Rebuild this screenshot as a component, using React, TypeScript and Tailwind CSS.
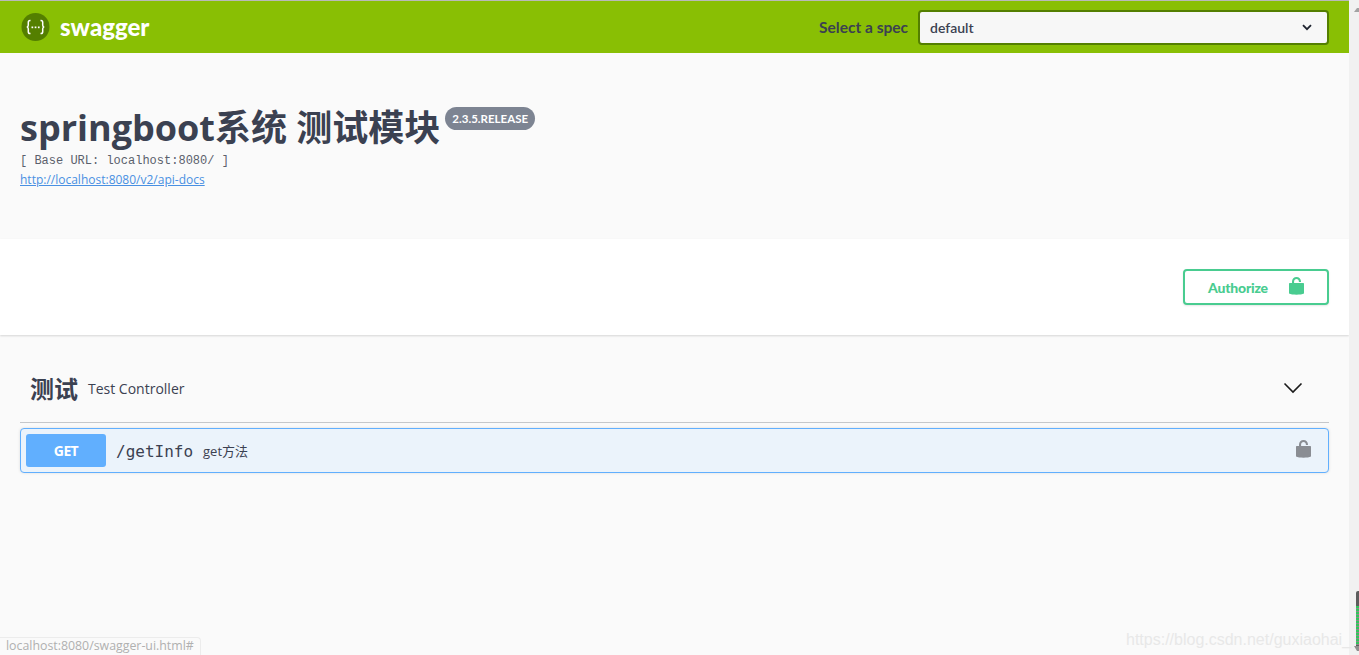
import React from "react";

const sans = "font-['Open_Sans','Noto_Sans_CJK_SC',sans-serif]";

function Lock({ color, className }: { color: string; className?: string }) {
  return (
    <svg viewBox="0 0 15 18" className={className} fill={color}>
      <path d="M0 7C0 6.4 .4 6 1 6H14C14.6 6 15 6.4 15 7V16.6C12 18.2 3 18.2 0 16.6Z" />
      <path d="M3 6.5V4.6C3 2 5 0 7.5 0C10 0 12 2 12 4.6V5H9.9V4.6C9.9 3.2 8.9 2.1 7.5 2.1C6.1 2.1 5.1 3.2 5.1 4.6V6.5Z" />
    </svg>
  );
}

function Logo() {
  return (
    <svg width="29" height="28" viewBox="0 0 29 28">
      <circle cx="14.5" cy="14" r="14" fill="#547f00" />
      <g fill="none" stroke="#fff" strokeWidth="1.5">
        <path d="M9.5 7.5H9C7.8 7.5 7.3 8.2 7.3 9.3V12C7.3 13.2 6.8 13.9 5.8 14C6.8 14.1 7.3 14.8 7.3 16V18.7C7.3 19.8 7.8 20.5 9 20.5H9.5" />
        <path d="M19.5 7.5H20C21.2 7.5 21.7 8.2 21.7 9.3V12C21.7 13.2 22.2 13.9 23.2 14C22.2 14.1 21.7 14.8 21.7 16V18.7C21.7 19.8 21.2 20.5 20 20.5H19.5" />
      </g>
      <g fill="#fff">
        <rect x="10.5" y="13.5" width="1.7" height="1.7" />
        <rect x="13.7" y="13.5" width="1.7" height="1.7" />
        <rect x="16.9" y="13.5" width="1.7" height="1.7" />
      </g>
    </svg>
  );
}

export default function App() {
  return (
    <div className={`relative flex h-[655px] w-[1359px] overflow-hidden bg-[#f1f1f1] ${sans}`}>
      <div className="flex w-[1349px] flex-col bg-[#fafafa]">
        <div className="h-px bg-[#b9b9b9]" />
        <header className="flex h-[52px] items-center bg-[#89bf04] pl-[21px] pr-[20px]">
          <Logo />
          <span className="ml-[10px] text-[24px] font-black leading-none text-white font-['Lato',sans-serif]">
            swagger
          </span>
          <div className="ml-auto flex items-center">
            <span className="mr-[10px] pt-[2px] text-[15.5px] font-bold text-[#3b4151] font-['Lato',sans-serif]">Select a spec</span>
            <div className="flex h-[35px] w-[411px] items-center justify-between rounded-[4px] border-2 border-[#547f00] bg-[#f7f7f7] pl-[10px] pr-[15px]">
              <span className="text-[14px] font-semibold text-[#3b4151] font-['Lato',sans-serif]">default</span>
              <svg width="10" height="7" viewBox="0 0 10 7" fill="none" stroke="#1f2430" strokeWidth="1.8">
                <path d="M1 1.2L5 5.2L9 1.2" />
              </svg>
            </div>
          </div>
        </header>

        <section className="h-[186px] pl-[20px] pt-[50px]">
          <div className="flex items-start">
            <h1 className="text-[36px] font-bold leading-[50px] text-[#3b4151]">springboot系统 测试模块</h1>
            <span className="ml-[5px] mt-[4px] rounded-[12px] bg-[#7d8492] px-[7px] py-[3.5px] text-[11.5px] font-bold leading-[16px] text-white font-['Lato',sans-serif]">
              2.3.5.RELEASE
            </span>
          </div>
          <div className="mt-[1px] text-[12px] leading-[14px] text-[#5a5f6c] font-['Liberation_Mono',monospace]">
            [ Base URL: localhost:8080/ ]
          </div>
          <a className="mt-[5px] block text-[12px] leading-[14px] text-[#4990e2] underline">
            http://localhost:8080/v2/api-docs
          </a>
        </section>

        <section className="flex h-[96px] items-center justify-end bg-white pr-[20px] shadow-[0_1px_2px_0_rgba(0,0,0,0.15)]">
          <button className="flex h-[36px] w-[146px] items-center rounded-[4px] border-2 border-[#49cc90] bg-white pl-[23px] text-[14px] font-black tracking-[-0.2px] text-[#49cc90] shadow-[0_1px_2px_rgba(0,0,0,0.1)] font-['Lato',sans-serif]">
            <span className="w-[59px] whitespace-nowrap text-left">Authorize</span>
            <Lock color="#49cc90" className="mb-[2px] ml-[22px] h-[18px] w-[15px]" />
          </button>
        </section>

        <section className="px-[20px] pt-[32px]">
          <div className="flex h-[56px] items-center border-b border-[#c5c7ca] pb-[12px] pl-[10px] pr-[26px]">
            <h2 className="text-[24px] font-bold text-[#3b4151]">测试</h2>
            <span className="ml-[10px] text-[14px] text-[#3b4151]">Test Controller</span>
            <svg className="ml-auto mb-[1px]" width="20" height="12" viewBox="0 0 20 12" fill="none" stroke="#1a1a1a" strokeWidth="1.6">
              <path d="M1.5 1.5L10 10L18.5 1.5" />
            </svg>
          </div>
          <div className="mt-[5px] flex h-[45px] items-center rounded-[4px] border border-[#61affe] bg-[#ebf3fb] pl-[5px] pr-[17px] shadow-[0_0_3px_rgba(0,0,0,0.12)]">
            <span className="flex h-[33px] w-[80px] items-center justify-center rounded-[3px] bg-[#61affe] text-[14px] font-bold tracking-[-0.6px] text-white">
              GET
            </span>
            <span className="ml-[10px] pt-[2px] text-[16px] font-normal text-[#3b4151] font-['DejaVu_Sans_Mono',monospace]">
              /getInfo
            </span>
            <span className="ml-[10px] pt-[2px] text-[13px] text-[#3b4151]">get方法</span>
            <Lock color="#8a8d93" className="mb-[3px] ml-auto h-[18px] w-[15px]" />
          </div>
        </section>
      </div>

      <div className="relative w-[10px] bg-[#f1f1f1]">
        <svg className="absolute right-0 top-[8px]" width="5" height="4" viewBox="0 0 5 4" fill="#a3a3a3">
          <path d="M0 4L3 0L5 0V4Z" />
        </svg>
        <div className="absolute right-0 top-[591px] flex h-[55px] w-[3px] flex-col justify-end rounded-tl-[2px] bg-[#5c5c5c] pb-[1px]">
          <div className="h-[39px] bg-[repeating-linear-gradient(180deg,#2fc65a_0,#2fc65a_2px,#8a8a8a_2px,#8a8a8a_3px)]" />
        </div>
        <svg className="absolute right-0 top-[646px]" width="5" height="5" viewBox="0 0 5 5" fill="#8f8f8f">
          <path d="M0 0H5V5H3Z" />
        </svg>
      </div>

      <div className="absolute bottom-0 left-0 flex h-[18px] items-center rounded-tr-[4px] border-r border-t border-[#ececec] bg-[#fafafa] pl-[6px] pr-[6px] text-[12.35px] text-[#b0b0b0]">
        localhost:8080/swagger-ui.html#
      </div>
      <div className="absolute bottom-[5px] left-[1126px] text-[16px] leading-[20px] text-[#e8e8e8] font-['Liberation_Sans',sans-serif]">
        https://blog.csdn.net/guxiaohai_
      </div>
    </div>
  );
}
